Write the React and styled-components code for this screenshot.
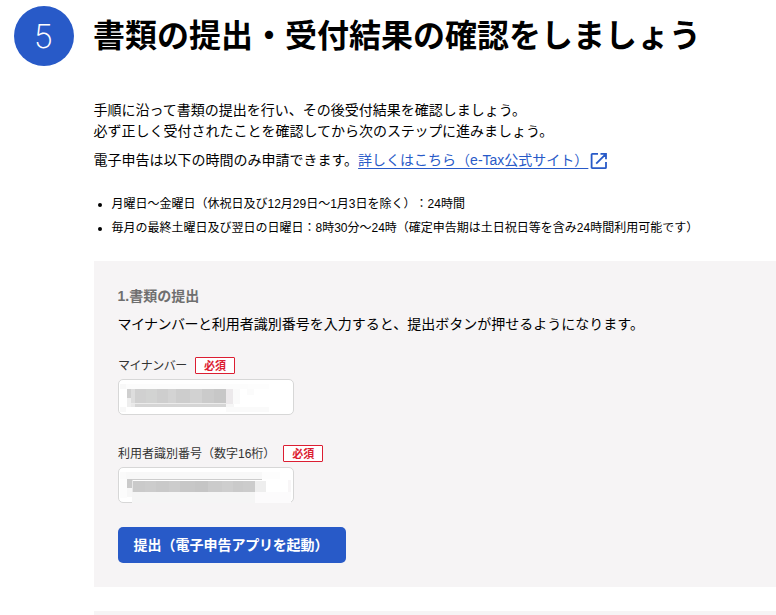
import React from "react";
import styled, { createGlobalStyle } from "styled-components";

const GlobalStyle = createGlobalStyle`
  * {
    box-sizing: border-box;
  }
  body {
    margin: 0;
    background: #fff;
    color: #000;
    font-family: "Liberation Sans", "Noto Sans CJK JP", sans-serif;
    font-size: 14px;
    line-height: 21px;
    text-spacing-trim: space-all;
    overflow: hidden;
  }
`;

const Page = styled.main`
  height: 615px;
  overflow: hidden;
  padding: 6px 0 0 14px;
  white-space: nowrap;
`;

const StepHeader = styled.header`
  display: flex;
  align-items: center;
  gap: 19px;
  height: 60px;
`;

const StepNumber = styled.span`
  display: flex;
  align-items: center;
  justify-content: center;
  width: 60px;
  height: 60px;
  padding: 1px 1px 0 0;
  border-radius: 50%;
  background: #285ac8;
  color: #fff;
  font-family: "Inter", sans-serif;
  font-size: 33px;
  font-weight: 250;
`;

const Title = styled.h1`
  margin: 0;
  font-size: 32px;
  font-weight: 700;
  line-height: 48px;
`;

const StepBody = styled.div`
  margin: 34px 0 0 80px;
`;

const Text = styled.p`
  margin: 0 0 8px -0.5px;
`;

// katakana runs are set slightly tighter than the rest
const Kana = styled.span`
  letter-spacing: ${(props) => props.$spacing || "-0.04em"};
`;

const Link = styled.a`
  display: inline-flex;
  align-items: center;
  color: #285ac8;
  text-decoration: underline;
  text-underline-offset: 3px;

  svg {
    margin-left: 2px;
  }
`;

const HoursList = styled.ul`
  margin: 21px 0 0;
  padding-left: 17.5px;
  font-size: 12px;
  line-height: 24px;
`;

const Panel = styled.section`
  margin-top: 21px;
  height: ${(props) => props.$height}px;
  padding: 24px;
  background: #f6f4f5;

  & + & {
    margin-top: 24px;
  }
`;

const PanelTitle = styled.h2`
  margin: 0 0 0 -0.5px;
  padding-top: 1px;
  height: 29px;
  color: #6f6f6f;
  font-size: 14px;
  font-weight: 700;
  line-height: 21px;
`;

const Field = styled.div`
  margin-top: ${(props) => props.$gap}px;
`;

const Label = styled.label`
  display: flex;
  align-items: center;
  gap: 8px;
  height: 18px;
  margin-bottom: 4px;
  color: #333;
  font-size: 12px;
  line-height: 18px;
`;

const Required = styled.span`
  display: flex;
  align-items: center;
  justify-content: center;
  width: 40px;
  height: 17px;
  margin-bottom: 2px;
  padding-top: 1px;
  border: 1px solid #dc1e32;
  border-radius: 1px;
  background: #fff;
  color: #dc1e32;
  font-size: 11px;
  font-weight: 700;
`;

const InputBox = styled.div`
  position: relative;
  width: 176px;
  height: 36px;
  border: 1px solid #d7d7d7;
  border-radius: 5px;
  background: #fff;

  svg {
    position: absolute;
    top: -1px;
    left: -1px;
  }
`;

const SubmitButton = styled.button`
  display: block;
  width: 228px;
  height: 36px;
  margin-top: 24px;
  padding: 0 0 0 15.5px;
  border: 0;
  border-radius: 5px;
  background: #285ac8;
  color: #fff;
  font: inherit;
  font-weight: 700;
  text-align: left;
`;

// x, y, width, height, colour
const numberMask = [
  [2, 5, 6, 5, "#f8f8f8"],
  [8, 5, 122, 5, "#fcfcfc"],
  [130, 5, 21, 5, "#fdfdfd"],
  [9, 10, 4, 9, "#cfcfcf"],
  [9, 19, 4, 9, "#eeeeee"],
  [13, 10, 4, 14, "#dddddd"],
  [17, 10, 11, 14, "#d0d0d0"],
  [28, 10, 11, 14, "#d2d3d2"],
  [39, 10, 11, 14, "#cecece"],
  [50, 10, 8, 14, "#d3d3d3"],
  [58, 10, 14, 14, "#cdcdcd"],
  [72, 10, 12, 14, "#d2d2d2"],
  [84, 10, 12, 14, "#cbcbcb"],
  [96, 10, 12, 14, "#c7c7c7"],
  [13, 24, 95, 1, "#ebebeb"],
  [13, 25, 4, 3, "#e8e8e8"],
  [17, 25, 91, 3, "#d5d5d5"],
  [108, 10, 7, 15, "#ece9eb"],
  [108, 25, 8, 3, "#f6f6f6"],
  [115, 10, 7, 15, "#fafafa"],
  [129, 10, 7, 6, "#fbfbfb"],
  [2, 28, 6, 5, "#f8f8f8"],
  [108, 28, 43, 5, "#fafafa"],
];

const userMask = [
  [2, 5, 6, 7, "#fafafa"],
  [8, 5, 136, 7, "#f8f8f8"],
  [144, 5, 18, 7, "#fdfdfd"],
  [2, 12, 7, 19, "#fcfcfc"],
  [9, 12, 5, 9, "#cacaca"],
  [9, 21, 5, 9, "#f7f7f7"],
  [14, 12, 130, 1, "#cdcdcd"],
  [14, 13, 1, 12, "#e7e7e7"],
  [15, 14, 12, 11, "#cacaca"],
  [27, 14, 11, 11, "#cccccc"],
  [38, 14, 13, 11, "#c9c9c9"],
  [51, 14, 11, 11, "#cccccc"],
  [62, 14, 15, 11, "#c7c7c7"],
  [77, 14, 13, 11, "#c5c5c5"],
  [90, 14, 14, 11, "#cbcbcb"],
  [104, 14, 11, 11, "#cecece"],
  [115, 14, 10, 11, "#cacaca"],
  [125, 14, 12, 11, "#cccccc"],
  [137, 14, 11, 11, "#eeeeee"],
  [170, 13, 3, 12, "#f8f6f7"],
  [14, 25, 123, 11, "#f5f5f5"],
  [137, 25, 36, 11, "#fcfbfc"],
];

function Mask({ blocks }) {
  return (
    <svg width="176" height="36" shapeRendering="crispEdges">
      {blocks.map(([x, y, width, height, fill], i) => (
        <rect key={i} x={x} y={y} width={width} height={height} fill={fill} />
      ))}
    </svg>
  );
}

function ExternalIcon() {
  return (
    <svg width="18" height="18" viewBox="0 0 18 18" fill="none" stroke="#285ac8" strokeWidth="1.8">
      <path d="M8 1.8H2.4a.8.8 0 0 0-.8.8v12.8a.8.8 0 0 0 .8.8h12.8a.8.8 0 0 0 .8-.8V10M10.5 1.8H16v5.4M16 1.8L6.2 11.6" />
    </svg>
  );
}

export default function App() {
  return (
    <>
      <GlobalStyle />
      <Page lang="ja">
        <StepHeader>
          <StepNumber>5</StepNumber>
          <Title>書類の提出・受付結果の確認をしましょう</Title>
        </StepHeader>
        <StepBody>
          <Text>
            手順に沿って書類の提出を行い、その後受付結果を確認しましょう。
            <br />
            必ず正しく受付されたことを確認してから次の
            <Kana $spacing="-0.02em">ステップ</Kana>に進みましょう。
          </Text>
          <Text>
            電子申告は以下の時間のみ申請できます。
            <Link href="#">
              詳しくはこちら（e-Tax公式サイト）
              <ExternalIcon />
            </Link>
          </Text>
          <HoursList>
            <li>月曜日～金曜日（休祝日及び12月29日～1月3日を除く）：24時間</li>
            <li>
              毎月の最終土曜日及び翌日の日曜日：8時30分～24時（確定申告期は土日祝日等を含み24時間利用可能です）
            </li>
          </HoursList>
          <Panel $height={326}>
            <PanelTitle>1.書類の提出</PanelTitle>
            <Text>
              <Kana>マイナンバー</Kana>と利用者識別番号を入力すると、提出ボタンが押せるようになります。
            </Text>
            <Field $gap={22}>
              <Label>
                <Kana>マイナンバー</Kana>
                <Required>必須</Required>
              </Label>
              <InputBox>
                <Mask blocks={numberMask} />
              </InputBox>
            </Field>
            <Field $gap={30}>
              <Label>
                利用者識別番号（数字16桁）<Required>必須</Required>
              </Label>
              <InputBox>
                <Mask blocks={userMask} />
              </InputBox>
            </Field>
            <SubmitButton>
              提出（電子申告<Kana $spacing="-0.02em">アプリを</Kana>起動）
            </SubmitButton>
          </Panel>
          <Panel $height={60} />
        </StepBody>
      </Page>
    </>
  );
}
